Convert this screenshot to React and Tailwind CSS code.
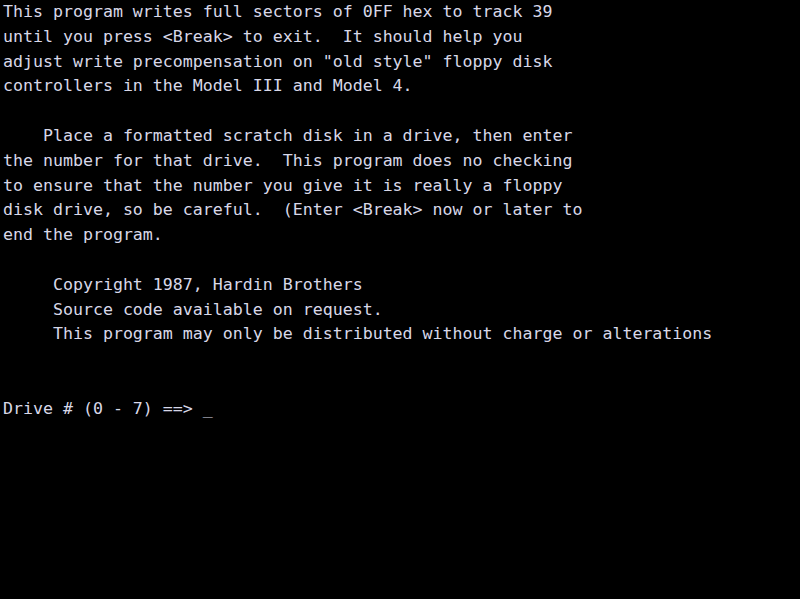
export default function App() {
  const lines = [
    "This program writes full sectors of 0FF hex to track 39",
    "until you press <Break> to exit.  It should help you",
    'adjust write precompensation on "old style" floppy disk',
    "controllers in the Model III and Model 4.",
    "",
    "    Place a formatted scratch disk in a drive, then enter",
    "the number for that drive.  This program does no checking",
    "to ensure that the number you give it is really a floppy",
    "disk drive, so be careful.  (Enter <Break> now or later to",
    "end the program.",
    "",
    "     Copyright 1987, Hardin Brothers",
    "     Source code available on request.",
    "     This program may only be distributed without charge or alterations",
    "",
    "",
    "Drive # (0 - 7) ==> _",
  ];
  return (
    <div className="w-[800px] h-[599px] bg-black overflow-hidden">
      <div className="pl-[3px] pt-0 text-[#d8d8e8] font-['DejaVu_Sans_Mono',monospace] text-[16.6px] leading-[24.8px] whitespace-pre">
        {lines.map((l, i) => (
          <div key={i} className="h-[24.8px]">{l}</div>
        ))}
      </div>
    </div>
  );
}
